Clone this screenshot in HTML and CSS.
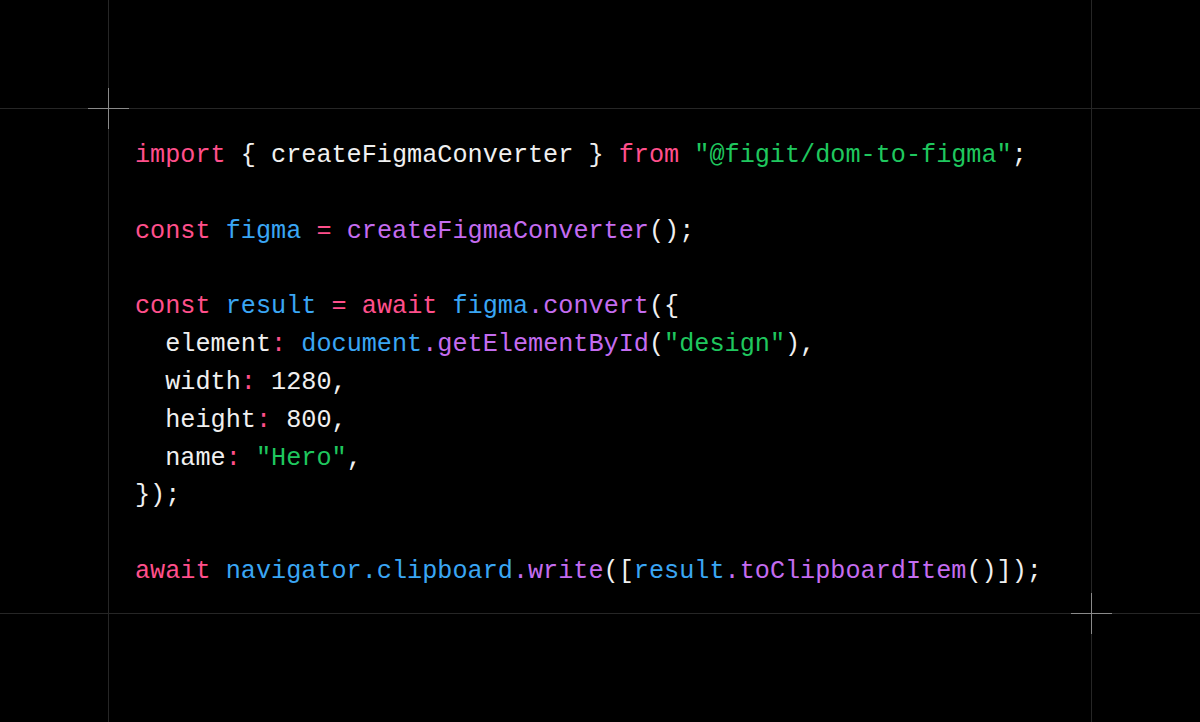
FILE: index.html
```html
<!DOCTYPE html>
<html lang="en">
<head>
<meta charset="utf-8">
<title>Code</title>
<link rel="stylesheet" href="styles.css">
</head>
<body>
<div class="stage">
  <div class="vstrip"></div>
  <div class="hstrip"></div>
  <div class="cell">
    <pre class="code"><span class="k">import</span> { createFigmaConverter } <span class="k">from</span> <span class="s">"@figit/dom-to-figma"</span>;

<span class="k">const</span> <span class="v">figma</span> <span class="k">=</span> <span class="f">createFigmaConverter</span>();

<span class="k">const</span> <span class="v">result</span> <span class="k">=</span> <span class="k">await</span> <span class="v">figma</span><span class="f">.convert</span>({
  element<span class="k">:</span> <span class="v">document</span><span class="f">.getElementById</span>(<span class="s">"design"</span>),
  width<span class="k">:</span> 1280,
  height<span class="k">:</span> 800,
  name<span class="k">:</span> <span class="s">"Hero"</span>,
});

<span class="k">await</span> <span class="v">navigator.clipboard</span><span class="f">.write</span>([<span class="v">result</span><span class="f">.toClipboardItem</span>()]);</pre>
    <div class="cross cross-tl"></div>
    <div class="cross cross-br"></div>
  </div>
</div>
</body>
</html>
```
FILE: styles.css
```css
* { box-sizing: border-box; }
html, body { margin: 0; padding: 0; background: #000; }
body { width: 1200px; height: 722px; overflow: hidden; }
.stage {
  display: grid;
  grid-template-columns: 108px 984px 1fr;
  grid-template-rows: 108px 506px 1fr;
  width: 1200px;
  height: 722px;
}
.vstrip {
  grid-column: 2;
  grid-row: 1 / 4;
  border-left: 1px solid #262626;
  border-right: 1px solid #262626;
}
.hstrip {
  grid-column: 1 / 4;
  grid-row: 2;
  border-top: 1px solid #262626;
  border-bottom: 1px solid #262626;
}
.cell {
  grid-column: 2;
  grid-row: 2;
  position: relative;
  padding: 29px 0 0 27px;
}
.code {
  margin: 0;
  font-family: "Liberation Mono", "DejaVu Sans Mono", monospace;
  font-size: 25.2px;
  line-height: 37.82px;
  color: #f0f0f0;
  white-space: pre;
}
.k { color: #ff4f8b; }
.v { color: #3aa6f4; }
.f { color: #c46cf0; }
.s { color: #1fc75e; }
.cross {
  position: absolute;
  width: 41px;
  height: 41px;
}
.cross::before, .cross::after {
  content: "";
  position: absolute;
  background: #8a8a8a;
}
.cross::before { left: 20px; top: 0; width: 1px; height: 41px; }
.cross::after { top: 20px; left: 0; height: 1px; width: 41px; }
.cross-tl { left: -20px; top: -20px; }
.cross-br { right: -20px; bottom: -20px; }
```
